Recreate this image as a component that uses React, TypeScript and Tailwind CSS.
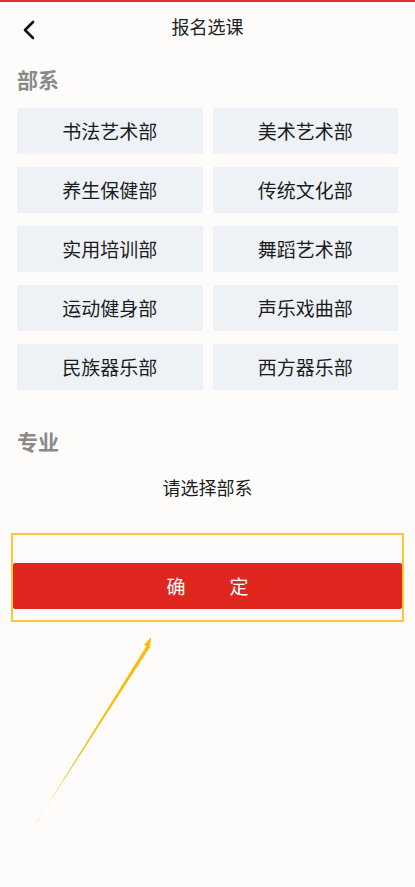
import React from "react";

const departments = [
  "书法艺术部",
  "美术艺术部",
  "养生保健部",
  "传统文化部",
  "实用培训部",
  "舞蹈艺术部",
  "运动健身部",
  "声乐戏曲部",
  "民族器乐部",
  "西方器乐部",
];

const cjk = { fontFamily: '"Noto Sans CJK SC", "Noto Sans", sans-serif' };

export default function App() {
  return (
    <div className="relative min-h-[887px] w-[415px] bg-[#fdfcfb]" style={cjk}>
      <div className="h-[2px] bg-[#e0322a]" />
      <header className="relative flex h-[48px] items-center justify-center">
        <button className="absolute left-[18px] top-[14px] p-1">
          <svg width="14" height="20" viewBox="0 0 14 20" fill="none">
            <path d="M11 2 L3 10 L11 18" stroke="#111" strokeWidth="2.6" strokeLinecap="round" strokeLinejoin="round" />
          </svg>
        </button>
        <h1 className="text-[18px] text-[#222]">报名选课</h1>
      </header>

      <section className="px-[17px]">
        <h2 className="mt-[19px] text-[21px] font-bold leading-none text-[#8a8a8a]">部系</h2>
        <div className="mt-[18px] grid grid-cols-2 gap-x-[10px] gap-y-[13px]">
          {departments.map((d) => (
            <div
              key={d}
              className="flex h-[46px] items-center justify-center bg-[#eef2f6] text-[19px] text-[#1c1c1c]"
            >
              {d}
            </div>
          ))}
        </div>
      </section>

      <section className="px-[17px]">
        <h2 className="mt-[41px] text-[21px] font-bold leading-none text-[#8a8a8a]">专业</h2>
        <p className="mt-[22px] text-center text-[18px] text-[#1c1c1c]">请选择部系</p>
      </section>

      <div className="mx-[11px] mt-[32px] h-[89px] border-2 border-[#fac936] pt-[28px]">
        <button className="flex h-[46px] w-full items-center justify-center gap-[44px] rounded-[2px] bg-[#e0271f] text-[19px] text-white">
          <span>确</span>
          <span>定</span>
        </button>
      </div>

      <svg className="pointer-events-none absolute left-0 top-0" width="415" height="887">
        <polygon points="36,823 37,822 147,645 150,647" fill="#fbbc0e" />
        <polygon points="151,637 144,645 150,648" fill="#fbbc0e" />
      </svg>
    </div>
  );
}
